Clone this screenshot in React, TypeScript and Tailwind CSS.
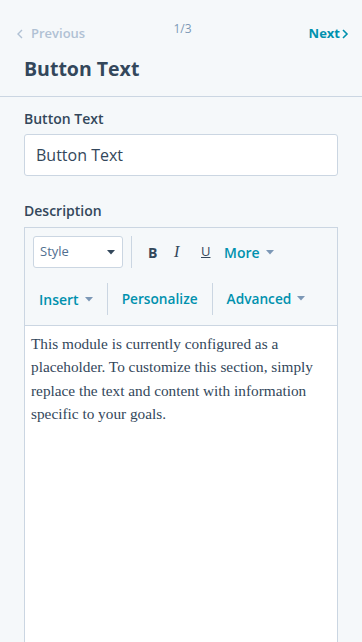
import React from "react";

const sans = { fontFamily: '"Open Sans", "Liberation Sans", sans-serif' };

function Caret({ className = "" }: { className?: string }) {
  return (
    <svg width="8" height="5" viewBox="0 0 8 5" className={className}>
      <path d="M0 0 L8 0 L4 4.5 Z" fill="currentColor" />
    </svg>
  );
}

export default function App() {
  return (
    <div className="w-[362px] h-[642px] overflow-hidden bg-[#f5f8fa] text-[#33475b]" style={sans}>
      <div className="grid grid-cols-3 items-start pl-[15px] pr-[13px] pt-[22px] h-[44px]">
        <div className="flex items-center gap-[7px] text-[#b0c1d4] text-[13px] font-semibold pt-[2px]">
          <svg width="8" height="10" viewBox="0 0 8 10" className="ml-[1px]">
            <path d="M6 1 L2 5 L6 9" stroke="currentColor" strokeWidth="1.4" fill="none" />
          </svg>
          <span>Previous</span>
        </div>
        <div className="text-[12px] text-[#7c98b6] -mt-[2px] text-center pl-[1px]">1/3</div>
        <div className="flex items-center justify-end gap-[1px] text-[#0091ae] text-[13px] font-bold pt-[2px]">
          <span>Next</span>
          <svg width="8" height="10" viewBox="0 0 8 10">
            <path d="M2 1 L6 5 L2 9" stroke="currentColor" strokeWidth="1.6" fill="none" />
          </svg>
        </div>
      </div>
      <div className="px-[24px] h-[53px] pt-[12px] border-b border-[#cbd6e2]">
        <h1 className="text-[19.5px] font-bold leading-[26px]">Button Text</h1>
      </div>
      <div className="px-[24px] pt-[12px]">
        <div className="text-[14px] font-semibold leading-[20px]">Button Text</div>
        <div className="mt-[5px] h-[42px] bg-white border border-[#cbd6e2] rounded-[3px] flex items-center px-[11px] text-[16px]">
          Button Text
        </div>
        <div className="mt-[25px] text-[14px] font-semibold leading-[20px]">Description</div>
        <div className="mt-[6px] border border-[#cbd6e2] h-[500px] flex flex-col">
          <div className="bg-[#f5f8fa] border-b border-[#cbd6e2] px-[8px] pt-[8px]">
            <div className="flex items-center h-[32px]">
              <div className="w-[90px] h-[32px] bg-white border border-[#cbd6e2] rounded-[3px] flex items-center justify-between px-[6px] text-[13px] text-[#516f90]">
                <span>Style</span>
                <Caret className="text-[#33475b] mr-[1px]" />
              </div>
              <div className="w-px h-[32px] bg-[#cbd6e2] ml-[8px]" />
              <div className="flex items-center ml-[16px] text-[14px]">
                <span className="font-bold w-[26px]">B</span>
                <span className="italic w-[27px] text-[16px]" style={{ fontFamily: '"Liberation Serif", serif' }}>I</span>
                <span className="underline w-[23px] text-[13px]">U</span>
                <span className="text-[#0091ae] font-semibold text-[14px]">More</span>
                <Caret className="text-[#7c98b6] ml-[6px]" />
              </div>
            </div>
            <div className="flex items-center h-[32px] mt-[15px] mb-[10px]">
              <div className="flex items-center pl-[6px] pr-[14px] text-[#0091ae] font-semibold text-[14px]">
                <span>Insert</span>
                <Caret className="text-[#7c98b6] ml-[6px]" />
              </div>
              <div className="w-px h-[32px] bg-[#cbd6e2]" />
              <div className="px-[14px] text-[#0091ae] font-semibold text-[13.7px]">Personalize</div>
              <div className="w-px h-[32px] bg-[#cbd6e2]" />
              <div className="flex items-center pl-[14px] text-[#0091ae] font-semibold text-[13.7px]">
                <span>Advanced</span>
                <Caret className="text-[#7c98b6] ml-[6px]" />
              </div>
            </div>
          </div>
          <div className="flex-1 bg-white px-[6px] pt-[6px] text-[15.3px] leading-[23.3px] text-[#33475b]" style={{ fontFamily: '"Liberation Serif", serif' }}>
            This module is currently configured as a placeholder. To customize this section, simply replace the text and content with information specific to your goals.
          </div>
        </div>
      </div>
    </div>
  );
}
